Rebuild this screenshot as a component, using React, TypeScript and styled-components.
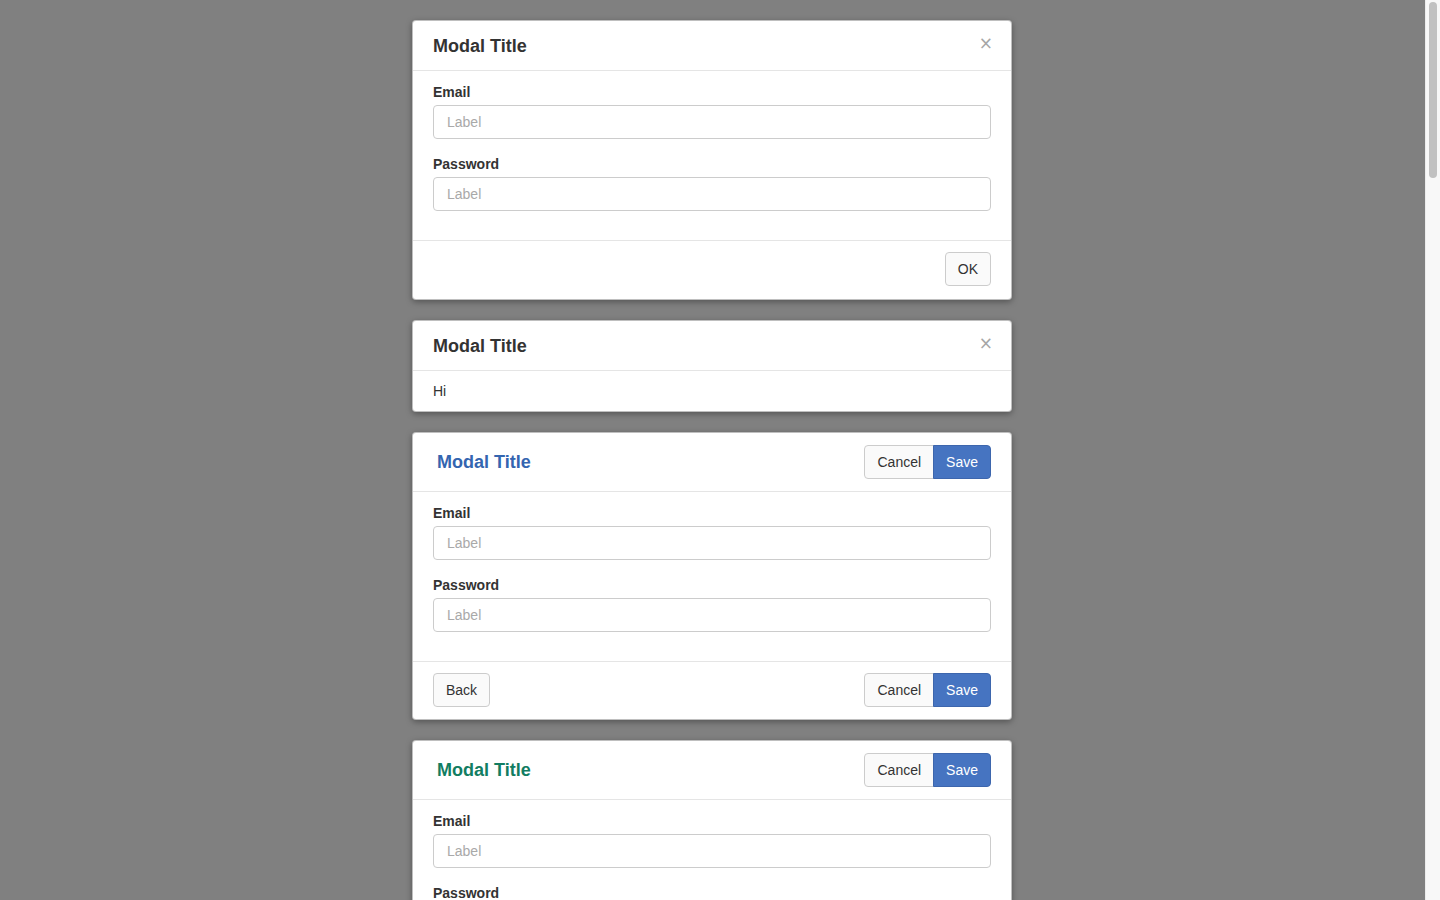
import styled, { createGlobalStyle } from "styled-components";

const GlobalStyle = createGlobalStyle`
  html, body {
    margin: 0;
    padding: 0;
    background: #808080;
    overflow: hidden;
  }
  body {
    font-family: "Liberation Sans", Arial, Helvetica, sans-serif;
    font-size: 14px;
    line-height: 20px;
    color: #333;
  }
  * {
    box-sizing: border-box;
  }
`;

const Viewport = styled.div`
  height: 100vh;
  overflow-y: auto;
  padding-right: 16px;
  &::-webkit-scrollbar {
    display: none;
  }
`;

// the reference shows a classic scrollbar, drawn here over the right edge
const ScrollTrack = styled.div`
  position: fixed;
  top: 0;
  right: 0;
  width: 15px;
  height: 100vh;
  background: #f8f8f8;
  border-left: 1px solid #ececec;
  padding: 2px 3px 0 3px;
`;

const ScrollThumb = styled.div`
  height: 176px;
  border-radius: 5px;
  background: #c1c1c1;
`;

const Page = styled.div`
  width: 600px;
  margin: 0 auto;
  padding: 20px 0 1px;
  display: flex;
  flex-direction: column;
  gap: 20px;
`;

const Modal = styled.div`
  background: #fff;
  border: 1px solid rgba(0, 0, 0, 0.25);
  border-radius: 4px;
  box-shadow: 0 2px 6px rgba(0, 0, 0, 0.35);
  overflow: hidden;
`;

const Header = styled.div<{ $tight?: boolean }>`
  display: flex;
  align-items: ${(p) => (p.$tight ? "center" : "flex-start")};
  justify-content: space-between;
  padding: ${(p) => (p.$tight ? "12px 20px" : "15px 20px 13px")};
  border-bottom: 1px solid #e5e5e5;
`;

const Title = styled.h4<{ $color?: string; $indent?: boolean }>`
  margin: 0;
  font-size: 18px;
  line-height: 21px;
  font-weight: bold;
  color: ${(p) => p.$color || "#333"};
  padding-left: ${(p) => (p.$indent ? "4px" : "0")};
`;

const Close = styled.button`
  border: none;
  background: none;
  padding: 0;
  margin: -3px -2px 0 0;
  font-family: "DejaVu Sans", "Liberation Sans", sans-serif;
  font-size: 17px;
  line-height: 20px;
  color: #a6a6a6;
  cursor: pointer;
`;

const Body = styled.div<{ $form?: boolean }>`
  padding: ${(p) => (p.$form ? "11px 20px 14px" : "10px 20px")};
`;

const FormGroup = styled.div`
  margin-bottom: 15px;
`;

const Label = styled.label`
  display: block;
  font-weight: bold;
  line-height: 20px;
  margin-bottom: 3px;
`;

const Input = styled.input`
  display: block;
  width: 100%;
  height: 34px;
  padding: 6px 13px;
  font-family: inherit;
  font-size: 14px;
  color: #555;
  border: 1px solid #ccc;
  border-radius: 4px;
  background: #fff;
  &::placeholder {
    color: #a9a9a9;
  }
`;

const Footer = styled.div<{ $first?: boolean }>`
  display: flex;
  align-items: center;
  justify-content: space-between;
  padding: ${(p) => (p.$first ? "11px 20px 13px" : "11px 20px 12px")};
  border-top: 1px solid #e5e5e5;
`;

const Spacer = styled.div`
  flex: 1;
`;

const Button = styled.button<{ $primary?: boolean }>`
  height: 34px;
  padding: 6px 12px;
  font-family: inherit;
  font-size: 14px;
  line-height: 20px;
  border-radius: 4px;
  border: 1px solid ${(p) => (p.$primary ? "#3d66ad" : "#ccc")};
  background: ${(p) => (p.$primary ? "#4674c1" : "#fafafa")};
  color: ${(p) => (p.$primary ? "#fff" : "#333")};
  cursor: pointer;
`;

const Group = styled.div`
  display: flex;
  ${Button}:first-child {
    border-top-right-radius: 0;
    border-bottom-right-radius: 0;
  }
  ${Button}:last-child {
    border-top-left-radius: 0;
    border-bottom-left-radius: 0;
    margin-left: -1px;
  }
`;

function Fields() {
  return (
    <>
      <FormGroup>
        <Label>Email</Label>
        <Input placeholder="Label" />
      </FormGroup>
      <FormGroup>
        <Label>Password</Label>
        <Input type="password" placeholder="Label" />
      </FormGroup>
    </>
  );
}

function Actions() {
  return (
    <Group>
      <Button>Cancel</Button>
      <Button $primary>Save</Button>
    </Group>
  );
}

function LoginModal() {
  return (
    <Modal>
      <Header>
        <Title>Modal Title</Title>
        <Close>×</Close>
      </Header>
      <Body $form>
        <Fields />
      </Body>
      <Footer $first>
        <Spacer />
        <Button>OK</Button>
      </Footer>
    </Modal>
  );
}

function SimpleModal() {
  return (
    <Modal>
      <Header>
        <Title>Modal Title</Title>
        <Close>×</Close>
      </Header>
      <Body>Hi</Body>
    </Modal>
  );
}

function ActionModal({ color }: { color: string }) {
  return (
    <Modal>
      <Header $tight>
        <Title $color={color} $indent>
          Modal Title
        </Title>
        <Actions />
      </Header>
      <Body $form>
        <Fields />
      </Body>
      <Footer>
        <Button>Back</Button>
        <Actions />
      </Footer>
    </Modal>
  );
}

function Set() {
  return (
    <>
      <LoginModal />
      <SimpleModal />
      <ActionModal color="#3465b0" />
      <ActionModal color="#127d62" />
    </>
  );
}

export default function App() {
  const sets = [0, 1, 2, 3];
  return (
    <>
      <GlobalStyle />
      <Viewport>
        <Page>
          {sets.map((i) => (
            <Set key={i} />
          ))}
          <LoginModal />
          <SimpleModal />
        </Page>
      </Viewport>
      <ScrollTrack>
        <ScrollThumb />
      </ScrollTrack>
    </>
  );
}
